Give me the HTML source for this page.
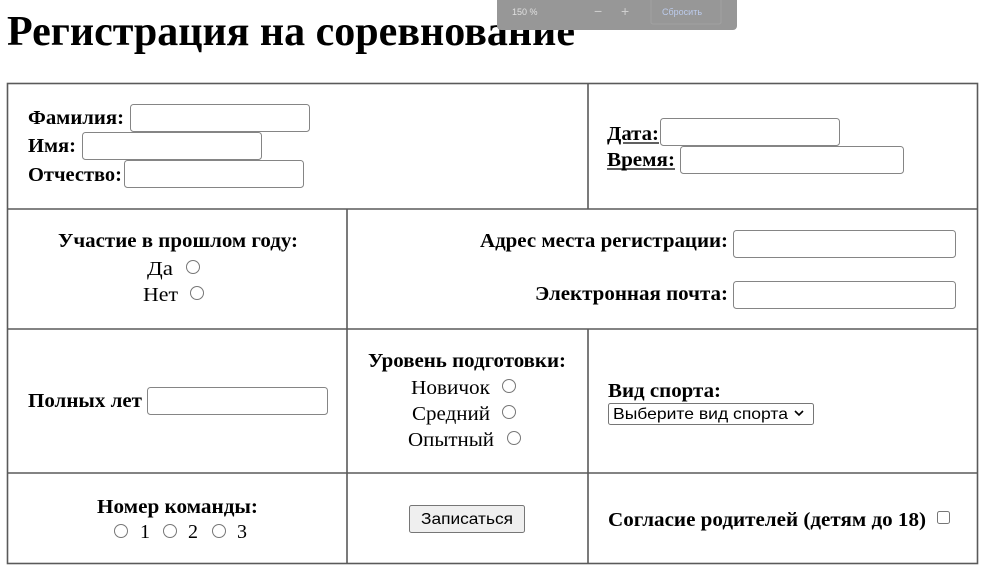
<!DOCTYPE html>
<html><head><meta charset="utf-8"><style>
html,body{margin:0;padding:0;background:#fff;width:1000px;height:585px;overflow:hidden}
svg{display:block}
.b{font-family:"Liberation Serif","Noto Serif CJK SC",serif;font-weight:bold;font-size:20px;fill:#000}
.n{font-family:"Liberation Serif","Noto Serif CJK SC",serif;font-size:20px;fill:#000}
.s{font-family:"Liberation Sans","Noto Sans CJK SC",sans-serif;font-size:16px;fill:#000}
.in{fill:#fff;stroke:#858585;stroke-width:1}
.r{fill:#fff;stroke:#767676;stroke-width:1}
</style></head><body>
<svg width="1000" height="585" viewBox="0 0 1000 585" xmlns="http://www.w3.org/2000/svg">
<text x="7" y="45" font-family="Liberation Serif, serif" font-weight="bold" font-size="42" textLength="568" lengthAdjust="spacingAndGlyphs">Регистрация на соревнование</text>
<rect x="497" y="-6" width="240" height="36" rx="4" fill="#979797"/>
<text x="512" y="15" font-family="Liberation Sans, sans-serif" font-size="9" fill="#e0e0e0">150 %</text>
<text x="594" y="16" font-family="Liberation Sans, sans-serif" font-size="14" fill="#cfcfcf">−</text>
<text x="621" y="16" font-family="Liberation Sans, sans-serif" font-size="14" fill="#cfcfcf">+</text>
<rect x="651" y="-2" width="70" height="26" rx="2" fill="none" stroke="#a2a2a2" stroke-width="1"/>
<text x="662" y="15" font-family="Liberation Sans, sans-serif" font-size="9" fill="#bccbec">Сбросить</text>
<g stroke="#5a5a5a" stroke-width="1.6" fill="none">
<rect x="7.5" y="83.5" width="970" height="480"/>
<line x1="7" y1="209" x2="978" y2="209"/>
<line x1="7" y1="329" x2="978" y2="329"/>
<line x1="7" y1="473" x2="978" y2="473"/>
<line x1="588" y1="83" x2="588" y2="209"/>
<line x1="347" y1="209" x2="347" y2="564"/>
<line x1="588" y1="329" x2="588" y2="564"/>
</g>
<text class="b" x="28" y="124" textLength="96" lengthAdjust="spacingAndGlyphs">Фамилия:</text>
<rect class="in" x="130.5" y="104.5" width="179" height="27" rx="3"/>
<text class="b" x="28" y="152" textLength="48" lengthAdjust="spacingAndGlyphs">Имя:</text>
<rect class="in" x="82.5" y="132.5" width="179" height="27" rx="3"/>
<text class="b" x="28" y="181" textLength="94" lengthAdjust="spacingAndGlyphs">Отчество:</text>
<rect class="in" x="124.5" y="160.5" width="179" height="27" rx="3"/>
<text class="b" x="607" y="140" textLength="52" lengthAdjust="spacingAndGlyphs">Дата:</text>
<line x1="623" y1="143" x2="659" y2="143" stroke="#000" stroke-width="1.2"/>
<rect class="in" x="660.5" y="118.5" width="179" height="27" rx="3"/>
<text class="b" x="607" y="166" textLength="68" lengthAdjust="spacingAndGlyphs">Время:</text>
<line x1="607" y1="169" x2="675" y2="169" stroke="#000" stroke-width="1.2"/>
<rect class="in" x="680.5" y="146.5" width="223" height="27" rx="3"/>
<text class="b" x="58" y="247" textLength="240" lengthAdjust="spacingAndGlyphs">Участие в прошлом году:</text>
<text class="n" x="147" y="275" textLength="26" lengthAdjust="spacingAndGlyphs">Да</text>
<circle class="r" cx="193" cy="267" r="6.5"/>
<text class="n" x="143" y="301" textLength="35" lengthAdjust="spacingAndGlyphs">Нет</text>
<circle class="r" cx="197" cy="293" r="6.5"/>
<text class="b" x="480" y="247" textLength="248" lengthAdjust="spacingAndGlyphs">Адрес места регистрации:</text>
<rect class="in" x="733.5" y="230.5" width="222" height="27" rx="3"/>
<text class="b" x="535" y="300" textLength="193" lengthAdjust="spacingAndGlyphs">Электронная почта:</text>
<rect class="in" x="733.5" y="281.5" width="222" height="27" rx="3"/>
<text class="b" x="28" y="407" textLength="114" lengthAdjust="spacingAndGlyphs">Полных лет</text>
<rect class="in" x="147.5" y="387.5" width="180" height="27" rx="3"/>
<text class="b" x="368" y="367" textLength="198" lengthAdjust="spacingAndGlyphs">Уровень подготовки:</text>
<text class="n" x="411" y="394" textLength="79" lengthAdjust="spacingAndGlyphs">Новичок</text>
<circle class="r" cx="509" cy="386" r="6.5"/>
<text class="n" x="412" y="420" textLength="78" lengthAdjust="spacingAndGlyphs">Средний</text>
<circle class="r" cx="509" cy="412" r="6.5"/>
<text class="n" x="408" y="446" textLength="86" lengthAdjust="spacingAndGlyphs">Опытный</text>
<circle class="r" cx="514" cy="438" r="6.5"/>
<text class="b" x="608" y="397" textLength="113" lengthAdjust="spacingAndGlyphs">Вид спорта:</text>
<rect x="608.5" y="403.5" width="205" height="21" rx="2" fill="#fff" stroke="#767676"/>
<text class="s" x="613" y="419" textLength="175" lengthAdjust="spacingAndGlyphs">Выберите вид спорта</text>
<path d="M795 411 L799 415 L803 411" fill="none" stroke="#000" stroke-width="1.6"/>
<text class="b" x="97" y="513" textLength="161" lengthAdjust="spacingAndGlyphs">Номер команды:</text>
<circle class="r" cx="121" cy="531" r="6.5"/>
<text class="n" x="140" y="538">1</text>
<circle class="r" cx="170" cy="531" r="6.5"/>
<text class="n" x="188" y="538">2</text>
<circle class="r" cx="219" cy="531" r="6.5"/>
<text class="n" x="237" y="538">3</text>
<rect x="409.5" y="505.5" width="115" height="27" rx="2" fill="#efefef" stroke="#767676"/>
<text class="s" x="421" y="524" textLength="92" lengthAdjust="spacingAndGlyphs">Записаться</text>
<text class="b" x="608" y="526" textLength="318" lengthAdjust="spacingAndGlyphs">Согласие родителей (детям до 18)</text>
<rect x="937.5" y="511.5" width="12" height="12" rx="2" fill="#fff" stroke="#767676"/>
</svg>
</body></html>
